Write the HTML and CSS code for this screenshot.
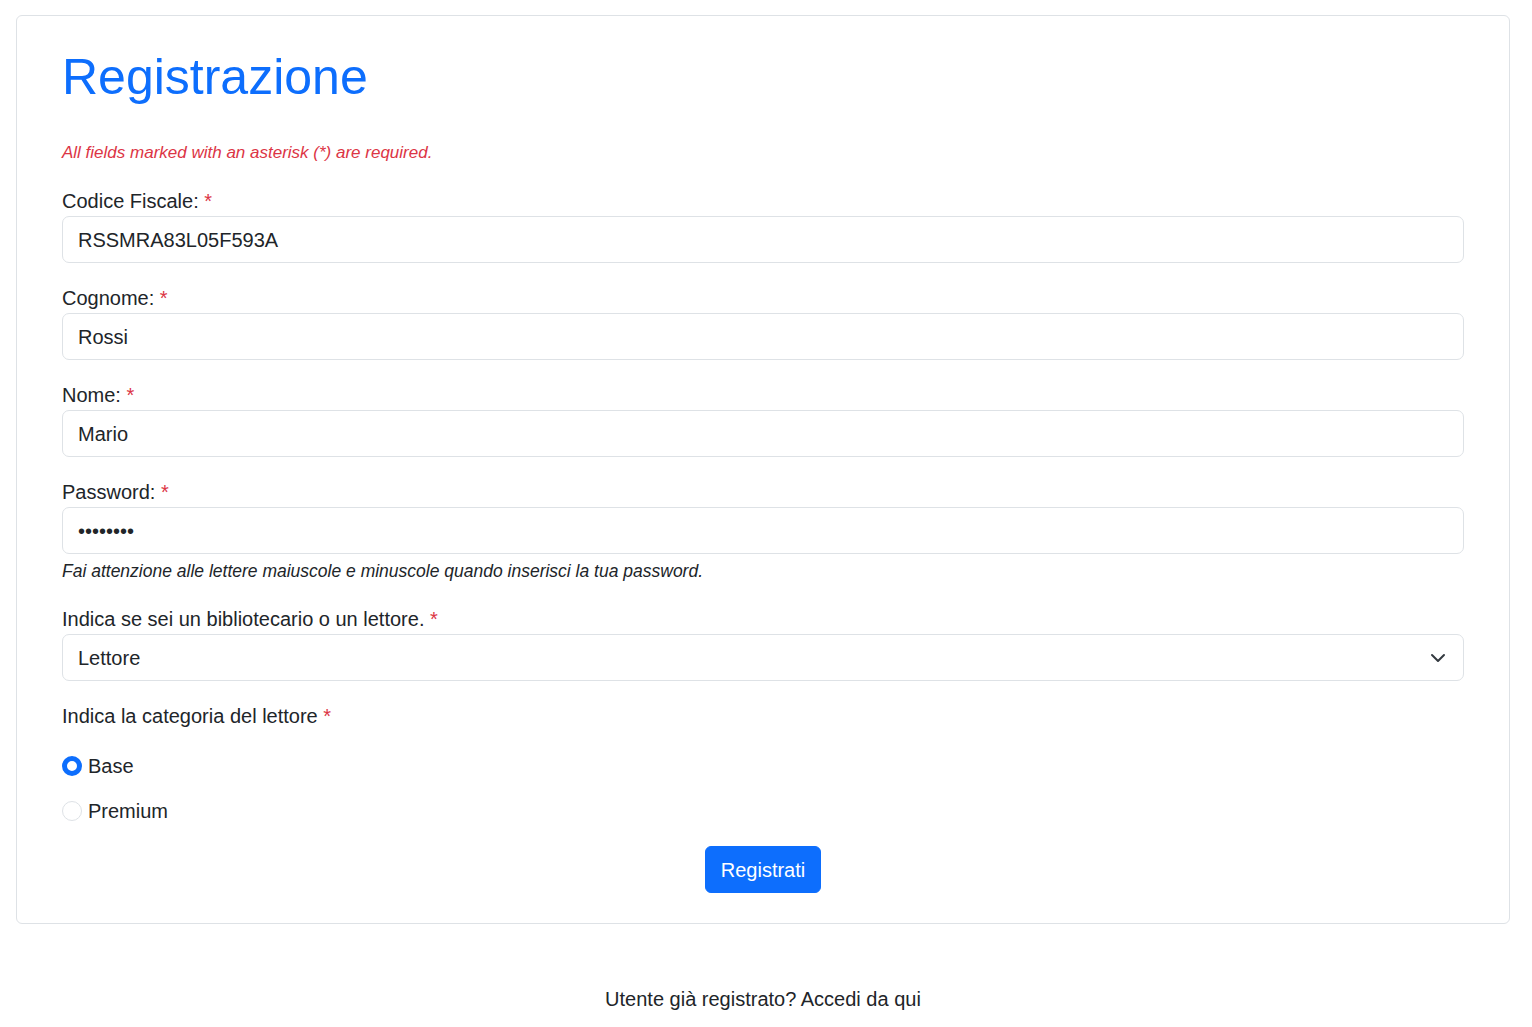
FILE: index.html
```html
<!DOCTYPE html>
<html lang="it">
<head>
<meta charset="utf-8">
<title>Registrazione</title>
<link rel="stylesheet" href="styles.css">
</head>
<body>
<main class="page">
  <section class="card">
    <h1 class="title">Registrazione</h1>
    <p class="required-note">All fields marked with an asterisk (*) are required.</p>
    <form class="form">
      <div class="field">
        <label class="label">Codice Fiscale: <span class="star">*</span></label>
        <div class="control">RSSMRA83L05F593A</div>
      </div>
      <div class="field">
        <label class="label">Cognome: <span class="star">*</span></label>
        <div class="control">Rossi</div>
      </div>
      <div class="field">
        <label class="label">Nome: <span class="star">*</span></label>
        <div class="control">Mario</div>
      </div>
      <div class="field">
        <label class="label">Password: <span class="star">*</span></label>
        <div class="control dots">••••••••</div>
        <div class="help">Fai attenzione alle lettere maiuscole e minuscole quando inserisci la tua password.</div>
      </div>
      <div class="field">
        <label class="label">Indica se sei un bibliotecario o un lettore. <span class="star">*</span></label>
        <div class="control select">
          <span>Lettore</span>
          <svg class="chev" width="16" height="16" viewBox="0 0 16 16"><path fill="none" stroke="#343a40" stroke-linecap="round" stroke-linejoin="round" stroke-width="2" d="m2 5 6 6 6-6"/></svg>
        </div>
      </div>
      <div class="field">
        <label class="label">Indica la categoria del lettore <span class="star">*</span></label>
        <div class="radios">
          <div class="radio-row"><span class="radio checked"></span><span class="radio-label">Base</span></div>
          <div class="radio-row"><span class="radio"></span><span class="radio-label">Premium</span></div>
        </div>
      </div>
      <div class="actions">
        <button type="button" class="btn">Registrati</button>
      </div>
    </form>
  </section>
  <p class="footer">Utente già registrato? Accedi da qui</p>
</main>
</body>
</html>
```
FILE: styles.css
```css
* { box-sizing: border-box; }
html, body { margin: 0; padding: 0; background: #fff; }
body {
  font-family: "Liberation Sans", Arial, sans-serif;
  font-size: 20px;
  line-height: 1.5;
  color: #212529;
}
.page {
  padding: 15px 22px 0 16px;
}
.card {
  border: 1px solid #dee2e6;
  border-radius: 6px;
  padding: 31px 45px 30px 45px;
}
.title {
  margin: 0;
  font-weight: 400;
  font-size: 50px;
  line-height: 60px;
  color: #0d6efd;
}
.required-note {
  margin: 34px 0 0 0;
  font-size: 17px;
  line-height: 24px;
  font-style: italic;
  color: #dc3545;
}
.form {
  display: flex;
  flex-direction: column;
  margin-top: 21px;
}
.field { margin-bottom: 20px; display: flex; flex-direction: column; }
.label { display: block; height: 30px; line-height: 30px; }
.star { color: #dc3545; }
.control {
  height: 47px;
  border: 1px solid #dee2e6;
  border-radius: 7px;
  padding: 7.5px 15px;
  line-height: 30px;
  display: flex;
  align-items: center;
}
.dots { font-size: 20px; letter-spacing: 0; }
.help {
  font-size: 17.5px;
  line-height: 26px;
  font-style: italic;
  margin-top: 4px;
}
.select { justify-content: space-between; padding-right: 17px; }
.chev { display: block; }
.radios { margin-top: 20px; display: flex; flex-direction: column; gap: 15px; }
.radio-row { display: flex; align-items: center; height: 30px; }
.radio {
  width: 20px; height: 20px;
  border-radius: 50%;
  border: 1px solid #dee2e6;
  background: #fff;
  margin-right: 6px;
}
.radio.checked {
  border: 5px solid #0d6efd;
}
.actions { display: flex; justify-content: center; }
.btn {
  font-family: inherit;
  font-size: 20px;
  line-height: 30px;
  color: #fff;
  background: #0d6efd;
  border: 1px solid #0d6efd;
  border-radius: 6px;
  padding: 7.5px 15px;
  height: 47px;
}
.footer {
  margin: 60px 0 0 0;
  text-align: center;
  line-height: 30px;
}
```
